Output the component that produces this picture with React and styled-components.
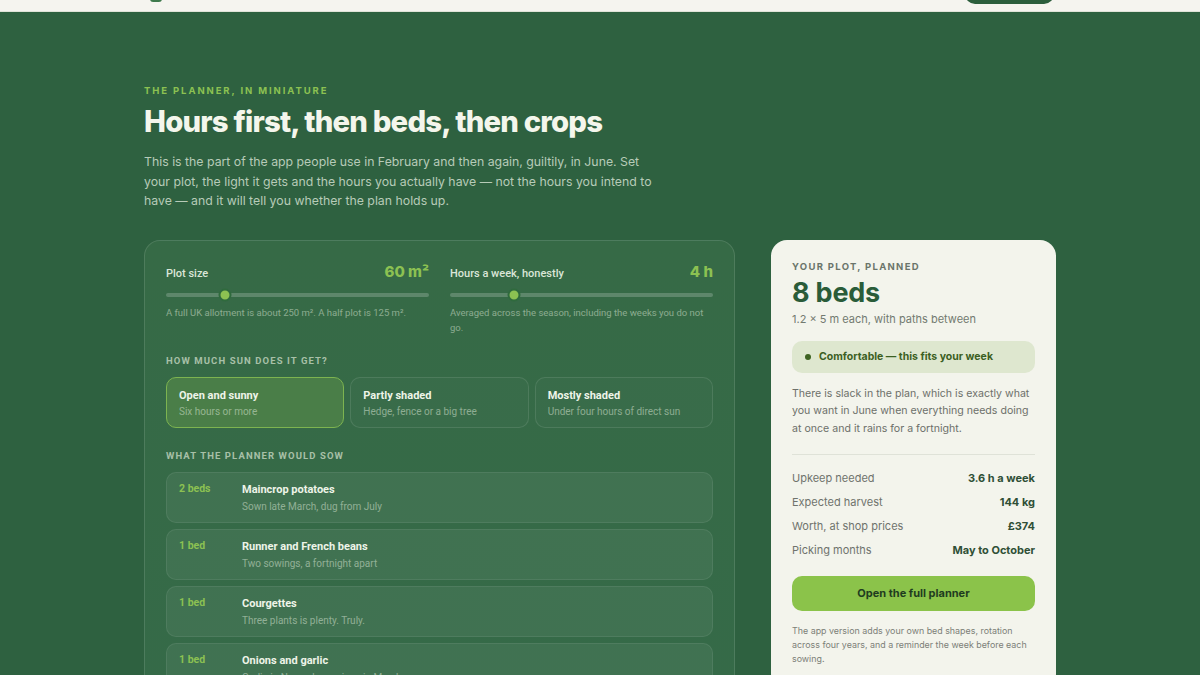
import React from "react";
import styled, { createGlobalStyle } from "styled-components";

const Global = createGlobalStyle`
  html, body { margin: 0; padding: 0; }
  body {
    background: #2e6140;
    font-family: Inter, "Noto Sans", sans-serif;
    -webkit-font-smoothing: antialiased;
  }
  * { box-sizing: border-box; }
`;

const Nav = styled.header`
  height: 12px;
  background: #f5f4ef;
  border-bottom: 1px solid #dfe3d8;
  overflow: hidden;
  display: flex;
  justify-content: center;
  align-items: flex-end;
  padding-bottom: 7px;
`;

const NavInner = styled.div`
  width: 912px;
  display: flex;
  justify-content: space-between;
  align-items: flex-end;
`;

const LogoMark = styled.div`
  width: 12px;
  height: 24px;
  margin-left: 6px;
  margin-bottom: 2px;
  border-radius: 3px;
  background: #3f7a4d;
`;

const NavButton = styled.div`
  width: 89px;
  height: 34px;
  border-radius: 10px;
  background: #2c5e3c;
  margin-right: 2px;
`;

const Main = styled.main`
  width: 912px;
  margin: 0 auto;
  padding-top: 72px;
`;

const Eyebrow = styled.div`
  font-size: 9.5px;
  font-weight: 700;
  letter-spacing: 1.9px;
  color: #8cc152;
  text-transform: uppercase;
  line-height: 14px;
`;

const Title = styled.h1`
  margin: 5px 0 0;
  font-size: 29.3px;
  font-weight: 800;
  letter-spacing: -0.8px;
  line-height: 38px;
  color: #f4f6ec;
`;

const Lead = styled.p`
  margin: 11px 0 0;
  max-width: 512px;
  font-size: 12.3px;
  line-height: 19.6px;
  color: #b7cbb8;
`;

const Layout = styled.div`
  margin-top: 29px;
  display: grid;
  grid-template-columns: 591px 285px;
  justify-content: space-between;
  align-items: start;
`;

const Panel = styled.section`
  background: linear-gradient(180deg, #366a46 0%, #356a48 100%);
  border: 1px solid rgba(255, 255, 255, 0.12);
  border-radius: 16px;
  padding: 21px 21px 40px;
  font-family: Roboto, "Noto Sans", sans-serif;
`;

const Sliders = styled.div`
  display: grid;
  grid-template-columns: 1fr 1fr;
  gap: 21px;
`;

const Field = styled.div`
  display: flex;
  flex-direction: column;
`;

const FieldHead = styled.div`
  display: flex;
  justify-content: space-between;
  align-items: baseline;
  height: 22px;
`;

const FieldLabel = styled.span`
  font-size: 11px;
  font-weight: 500;
  color: #dbe6d8;
`;

const FieldValue = styled.span`
  font-family: Inter, sans-serif;
  font-size: 15px;
  font-weight: 800;
  color: #8cc152;
`;

const Track = styled.div`
  position: relative;
  margin-top: 9px;
  height: 4px;
  border-radius: 2px;
  background: rgba(255, 255, 255, 0.2);
`;

const Thumb = styled.span`
  position: absolute;
  top: 50%;
  width: 13px;
  height: 13px;
  border-radius: 50%;
  background: #8cc152;
  border: 2px solid #2f6a3d;
  transform: translate(-50%, -50%);
`;

const Hint = styled.p`
  margin: 8px 0 0;
  font-size: 9.5px;
  line-height: 15px;
  color: rgba(226, 238, 222, 0.5);
`;

const SectionLabel = styled.div`
  margin-top: ${(p) => p.$top}px;
  font-size: 9.5px;
  font-weight: 700;
  letter-spacing: 1.1px;
  text-transform: uppercase;
  color: #a8c0a8;
  line-height: 14px;
`;

const SunGrid = styled.div`
  margin-top: 9px;
  display: grid;
  grid-template-columns: repeat(3, 1fr);
  gap: 6px;
`;

const SunOption = styled.div`
  height: 51px;
  border-radius: 10px;
  padding: 10px 12px 0;
  border: 1px solid ${(p) => (p.$active ? "#7db450" : "rgba(255,255,255,0.1)")};
  background: ${(p) => (p.$active ? "#4a7e48" : "rgba(255,255,255,0.02)")};
`;

const OptTitle = styled.div`
  font-size: 11px;
  font-weight: 700;
  color: #eef4e8;
  line-height: 15px;
`;

const OptSub = styled.div`
  font-size: 10px;
  color: rgba(226, 238, 222, 0.5);
  line-height: 17px;
`;

const CropList = styled.div`
  margin-top: 9px;
  display: flex;
  flex-direction: column;
  gap: 6px;
`;

const CropRow = styled.div`
  height: 51px;
  border-radius: 10px;
  border: 1px solid rgba(255, 255, 255, 0.08);
  background: rgba(255, 255, 255, 0.055);
  padding: 9px 12px 0;
  display: grid;
  grid-template-columns: 63px 1fr;
`;

const CropCount = styled.div`
  font-size: 10.5px;
  font-weight: 700;
  color: #8cc152;
  line-height: 14px;
`;

const CropTitle = styled.div`
  font-size: 11px;
  font-weight: 700;
  color: #eef4e8;
  line-height: 15px;
`;

const CropSub = styled.div`
  font-size: 10px;
  color: rgba(226, 238, 222, 0.5);
  line-height: 19px;
`;

const Card = styled.aside`
  background: #f3f4ec;
  border-radius: 16px;
  padding: 21px 21px 24px;
`;

const CardEyebrow = styled.div`
  font-size: 9.5px;
  font-weight: 700;
  letter-spacing: 1.3px;
  color: #6a746a;
  text-transform: uppercase;
  line-height: 12px;
`;

const BigNumber = styled.div`
  margin-top: 3px;
  font-size: 27px;
  font-weight: 700;
  letter-spacing: -0.2px;
  color: #2a5c39;
  line-height: 34px;
`;

const CardSub = styled.div`
  margin-top: 1px;
  font-size: 11px;
  color: #727a70;
  line-height: 16px;
`;

const Status = styled.div`
  margin-top: 14px;
  height: 32px;
  border-radius: 10px;
  background: #dee7cf;
  display: flex;
  align-items: center;
  gap: 8px;
  padding: 0 13px;
  font-size: 10.5px;
  font-weight: 700;
  color: #3c5f23;
`;

const Dot = styled.span`
  width: 6px;
  height: 6px;
  border-radius: 50%;
  background: #3e6322;
`;

const CardText = styled.p`
  margin: 12px 0 0;
  font-size: 10.6px;
  line-height: 17.6px;
  color: #6d706a;
`;

const Divider = styled.hr`
  margin: 16px 0 0;
  border: 0;
  border-top: 1px solid #dfe2d8;
`;

const Stats = styled.dl`
  margin: 11px 0 0;
  display: flex;
  flex-direction: column;
`;

const StatRow = styled.div`
  display: flex;
  justify-content: space-between;
  align-items: center;
  height: 24px;
  font-size: 11px;
`;

const StatLabel = styled.dt`
  color: #6f736c;
`;

const StatValue = styled.dd`
  margin: 0;
  font-weight: 700;
  color: #2f4f36;
`;

const CTA = styled.button`
  margin-top: 14px;
  width: 100%;
  height: 35px;
  border: 0;
  border-radius: 10px;
  background: #8bc34a;
  font-family: Inter, sans-serif;
  font-size: 11px;
  font-weight: 700;
  color: #1f3c1f;
`;

const Foot = styled.p`
  margin: 13px 0 0;
  font-size: 8.9px;
  line-height: 14px;
  color: #7c8078;
`;

const sun = [
  { t: "Open and sunny", s: "Six hours or more", active: true },
  { t: "Partly shaded", s: "Hedge, fence or a big tree" },
  { t: "Mostly shaded", s: "Under four hours of direct sun" },
];

const crops = [
  { n: "2 beds", t: "Maincrop potatoes", s: "Sown late March, dug from July" },
  { n: "1 bed", t: "Runner and French beans", s: "Two sowings, a fortnight apart" },
  { n: "1 bed", t: "Courgettes", s: "Three plants is plenty. Truly." },
  { n: "1 bed", t: "Onions and garlic", s: "Garlic in November, onions in March" },
];

const stats = [
  ["Upkeep needed", "3.6 h a week"],
  ["Expected harvest", "144 kg"],
  ["Worth, at shop prices", "£374"],
  ["Picking months", "May to October"],
];

export default function App() {
  return (
    <>
      <Global />
      <Nav>
        <NavInner>
          <LogoMark />
          <NavButton />
        </NavInner>
      </Nav>
      <Main>
        <Eyebrow>The planner, in miniature</Eyebrow>
        <Title>Hours first, then beds, then crops</Title>
        <Lead>
          This is the part of the app people use in February and then again, guiltily, in June. Set
          your plot, the light it gets and the hours you actually have — not the hours you intend to
          have — and it will tell you whether the plan holds up.
        </Lead>
        <Layout>
          <Panel>
            <Sliders>
              <Field>
                <FieldHead>
                  <FieldLabel>Plot size</FieldLabel>
                  <FieldValue>60 m²</FieldValue>
                </FieldHead>
                <Track>
                  <Thumb style={{ left: "22.4%" }} />
                </Track>
                <Hint>A full UK allotment is about 250 m². A half plot is 125 m².</Hint>
              </Field>
              <Field>
                <FieldHead>
                  <FieldLabel>Hours a week, honestly</FieldLabel>
                  <FieldValue>4 h</FieldValue>
                </FieldHead>
                <Track>
                  <Thumb style={{ left: "24.3%" }} />
                </Track>
                <Hint>Averaged across the season, including the weeks you do not go.</Hint>
              </Field>
            </Sliders>
            <SectionLabel $top={19}>How much sun does it get?</SectionLabel>
            <SunGrid>
              {sun.map((o) => (
                <SunOption key={o.t} $active={o.active}>
                  <OptTitle>{o.t}</OptTitle>
                  <OptSub>{o.s}</OptSub>
                </SunOption>
              ))}
            </SunGrid>
            <SectionLabel $top={21}>What the planner would sow</SectionLabel>
            <CropList>
              {crops.map((c) => (
                <CropRow key={c.t}>
                  <CropCount>{c.n}</CropCount>
                  <div>
                    <CropTitle>{c.t}</CropTitle>
                    <CropSub>{c.s}</CropSub>
                  </div>
                </CropRow>
              ))}
            </CropList>
          </Panel>
          <Card>
            <CardEyebrow>Your plot, planned</CardEyebrow>
            <BigNumber>8 beds</BigNumber>
            <CardSub>1.2 × 5 m each, with paths between</CardSub>
            <Status>
              <Dot />
              Comfortable — this fits your week
            </Status>
            <CardText>
              There is slack in the plan, which is exactly what you want in June when everything
              needs doing at once and it rains for a fortnight.
            </CardText>
            <Divider />
            <Stats>
              {stats.map(([l, v]) => (
                <StatRow key={l}>
                  <StatLabel>{l}</StatLabel>
                  <StatValue>{v}</StatValue>
                </StatRow>
              ))}
            </Stats>
            <CTA>Open the full planner</CTA>
            <Foot>
              The app version adds your own bed shapes, rotation across four years, and a reminder
              the week before each sowing.
            </Foot>
          </Card>
        </Layout>
      </Main>
    </>
  );
}
